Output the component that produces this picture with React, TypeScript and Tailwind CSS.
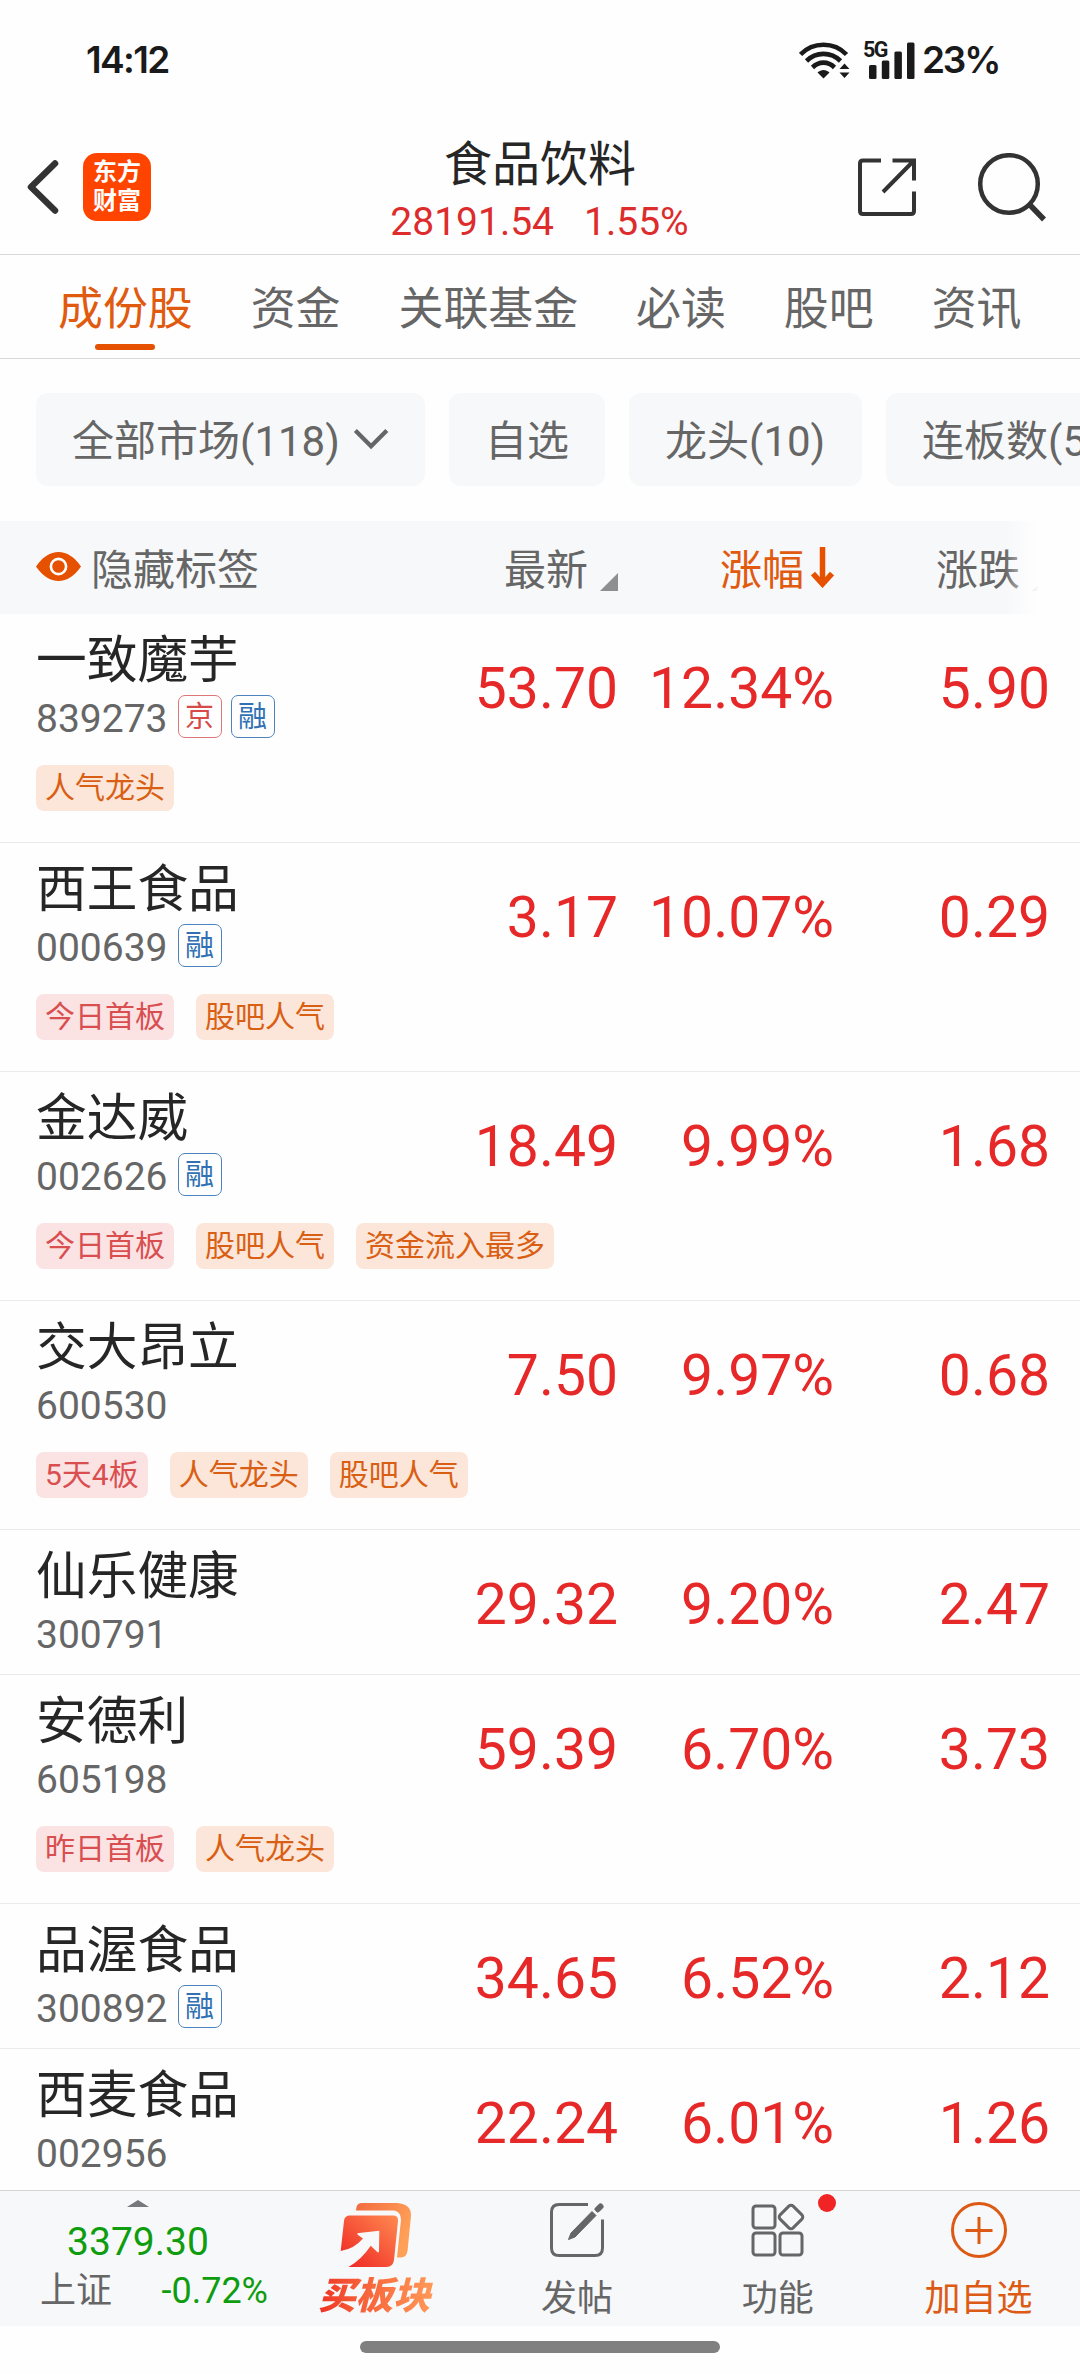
import React from 'react';
import clsx from 'clsx';

type TagTone = 'red' | 'orange';

interface Stock {
  name: string;
  code: string;
  badges?: string[];
  price: string;
  percent: string;
  change: string;
  tags?: { label: string; tone: TagTone }[];
}

const tabs = ['成份股', '资金', '关联基金', '必读', '股吧', '资讯'];

const stocks: Stock[] = [
  {
    name: '一致魔芋', code: '839273', badges: ['京', '融'], price: '53.70', percent: '12.34%', change: '5.90',
    tags: [{ label: '人气龙头', tone: 'orange' }],
  },
  {
    name: '西王食品', code: '000639', badges: ['融'], price: '3.17', percent: '10.07%', change: '0.29',
    tags: [{ label: '今日首板', tone: 'red' }, { label: '股吧人气', tone: 'orange' }],
  },
  {
    name: '金达威', code: '002626', badges: ['融'], price: '18.49', percent: '9.99%', change: '1.68',
    tags: [
      { label: '今日首板', tone: 'red' },
      { label: '股吧人气', tone: 'orange' },
      { label: '资金流入最多', tone: 'orange' },
    ],
  },
  {
    name: '交大昂立', code: '600530', price: '7.50', percent: '9.97%', change: '0.68',
    tags: [
      { label: '5天4板', tone: 'red' },
      { label: '人气龙头', tone: 'orange' },
      { label: '股吧人气', tone: 'orange' },
    ],
  },
  { name: '仙乐健康', code: '300791', price: '29.32', percent: '9.20%', change: '2.47' },
  {
    name: '安德利', code: '605198', price: '59.39', percent: '6.70%', change: '3.73',
    tags: [{ label: '昨日首板', tone: 'red' }, { label: '人气龙头', tone: 'orange' }],
  },
  { name: '品渥食品', code: '300892', badges: ['融'], price: '34.65', percent: '6.52%', change: '2.12' },
  { name: '西麦食品', code: '002956', price: '22.24', percent: '6.01%', change: '1.26' },
];

const StatusBar = () => (
  <div className="h-[120px] shrink-0 flex items-center pl-[86px] text-[#1a1a1a]">
    <span className="w-[713px] font-['Inter'] font-semibold text-[37px] leading-[40px] tracking-[-1.6px]">14:12</span>
    <svg width="51" height="37" viewBox="0 0 51 37" fill="none" stroke="#1a1a1a" strokeWidth="4.6">
      <path d="M1.5 12.5C14 -0.5 35 -0.5 47.5 12.5" />
      <path d="M7.5 19C17 9.5 32 9.5 41.5 19" />
      <path d="M13.5 25.5C20 19 29 19 35.5 25.5" />
      <path d="M24.5 36.5L18.5 30.5C22 27 27 27 30.5 30.5Z" fill="#1a1a1a" stroke="none" />
      <path d="M40.5 27L45.5 21.5L50.5 27ZM40.5 30.5L45.5 36L50.5 30.5Z" fill="#1a1a1a" stroke="none" />
    </svg>
    <div className="relative ml-[13px] w-[52px] h-[37px]">
      <span className="absolute left-0 -top-[1px] font-['Roboto'] font-bold text-[21.5px] leading-[18px] tracking-[-1.5px]">
        5G
      </span>
      <svg className="absolute left-0 top-0" width="52" height="37" viewBox="0 0 52 37" fill="#1a1a1a">
        <rect x="6" y="23" width="7.5" height="14" rx="1.5" />
        <rect x="18.8" y="18.5" width="7.5" height="18.5" rx="1.5" />
        <rect x="31.4" y="9.5" width="7.5" height="27.5" rx="1.5" />
        <rect x="44" y="0.5" width="7.5" height="36.5" rx="1.5" />
      </svg>
    </div>
    <span className="ml-[7px] font-['Inter'] font-semibold text-[37px] leading-[40px] tracking-[-2.2px]">23%</span>
  </div>
);

const Header = () => (
  <div className="h-[135px] shrink-0 flex border-b border-[#d8d8d8]">
    <div className="w-[360px] pl-[26px] pt-[33px] flex items-start">
      <svg className="mt-[6px]" width="34" height="56" viewBox="0 0 34 56" fill="none" stroke="#333" strokeWidth="6.5" strokeLinecap="round" strokeLinejoin="round">
        <path d="M29 4.5L5 28L29 51.5" />
      </svg>
      <div className="ml-[23px] size-[68px] rounded-[14px] bg-[#ff4400] text-white font-bold text-[24px] leading-[29px] flex flex-col items-center justify-center">
        <span>东方</span>
        <span>财富</span>
      </div>
    </div>
    <div className="w-[360px] pt-[20px] flex flex-col items-center whitespace-nowrap">
      <h1 className="text-[48px] leading-[50px] text-[#262626]">食品饮料</h1>
      <div className="mt-[9px] -ml-[1px] flex gap-[30px] text-[39px] leading-[46px] text-[#dd2c2c]">
        <span>28191.54</span>
        <span>1.55%</span>
      </div>
    </div>
    <div className="w-[360px] pl-[137px] pt-[33px] flex items-start">
      <svg className="mt-[4px]" width="60" height="60" viewBox="0 0 60 60" fill="none" stroke="#333" strokeWidth="4">
        <path d="M24 3.5H6Q3 3.5 3 6.5V54Q3 57 6 57H54Q57 57 57 54V34.5" />
        <path d="M35.5 3.5H57V23.5M56 4.5L26 35" />
      </svg>
      <svg className="ml-[60px]" width="70" height="70" viewBox="0 0 70 70" fill="none" stroke="#333" strokeWidth="4.5">
        <circle cx="32" cy="31" r="28.8" />
        <path d="M52.5 51.5L67 66.5" strokeWidth="5.5" />
      </svg>
    </div>
  </div>
);

const Tabs = () => (
  <div className="h-[104px] shrink-0 flex gap-[58px] pl-[58px] pt-[29px] border-b border-[#d8d8d8] text-[44.9px] leading-[52px] text-[#666] whitespace-nowrap">
    {tabs.map((tab, i) => (
      <div key={tab} className={clsx('flex flex-col items-center', i === 0 && 'text-[#e05a10]')}>
        <span>{tab}</span>
        {i === 0 && <i className="mt-[8px] w-[60px] h-[6px] rounded-full bg-[#e65100]" />}
      </div>
    ))}
  </div>
);

const Filters = () => (
  <div className="h-[162px] shrink-0 flex gap-6 pl-9 pt-[34px] overflow-hidden text-[42px] leading-[97px] text-[#666] whitespace-nowrap">
    <div className="h-[93px] w-[389px] shrink-0 px-9 rounded-xl bg-[#f7f8fa] flex items-start">
      <span>全部市场(118)</span>
      <svg className="ml-[13px] mt-[34px]" width="38" height="24" viewBox="0 0 38 24" fill="none" stroke="#666" strokeWidth="4.5">
        <path d="M2.5 3L19 19.5L35.5 3" />
      </svg>
    </div>
    <div className="h-[93px] shrink-0 px-9 rounded-xl bg-[#f7f8fa]">自选</div>
    <div className="h-[93px] w-[233px] shrink-0 px-9 rounded-xl bg-[#f7f8fa]">龙头(10)</div>
    <div className="h-[93px] shrink-0 px-9 rounded-xl bg-[#f7f8fa]">连板数(5)</div>
  </div>
);

const TableHead = () => (
  <div className="relative h-[93px] shrink-0 grid grid-cols-[418px_200px_216px_216px] bg-[#f7f8fa] text-[42px] leading-[100px] text-[#666] whitespace-nowrap">
    <div className="pl-9 flex items-start">
      <svg className="mt-[31px]" width="45" height="29" viewBox="0 0 45 29">
        <path d="M0 14.5Q10 0 22.5 0T45 14.5Q35 29 22.5 29T0 14.5Z" fill="#e65100" />
        <circle cx="22.5" cy="14.5" r="7.6" fill="none" stroke="#fff" strokeWidth="2.6" />
      </svg>
      <span className="ml-[10px]">隐藏标签</span>
    </div>
    <div className="flex justify-end">
      <span>最新</span>
      <svg className="ml-[12px] mt-[52px]" width="18" height="18" viewBox="0 0 18 18">
        <path d="M18 0V18H0Z" fill="#8e8e93" />
      </svg>
    </div>
    <div className="flex justify-end text-[#e05a10]">
      <span>涨幅</span>
      <svg className="ml-[7px] mt-[26px]" width="23" height="41" viewBox="0 0 23 41" fill="none" stroke="#e65100">
        <path d="M11.5 0V36" strokeWidth="5.5" />
        <path d="M2 26.5L11.5 37L21 26.5" strokeWidth="5.5" />
      </svg>
    </div>
    <div className="flex justify-end">
      <span>涨跌</span>
      <svg className="ml-[12px] mt-[52px]" width="18" height="18" viewBox="0 0 18 18">
        <path d="M18 0V18H0Z" fill="#8e8e93" />
      </svg>
    </div>
    {/* fade towards the columns further right */}
    <div className="absolute right-0 top-0 h-full w-[75px] bg-linear-to-r from-[#fefefe]/0 to-[#fefefe] to-45%" />
  </div>
);

const StockRow: React.FC<{ stock: Stock }> = ({ stock }) => (
  <div className={clsx('shrink-0 border-b border-[#ebebeb] whitespace-nowrap', stock.tags ? 'h-[229px]' : 'h-[145px]')}>
    <div className="h-[125px] grid grid-cols-[418px_200px_216px_216px]">
      <div className="pl-9 pt-[17px]">
        <div className="text-[50.7px] leading-[60px] text-[#262626]">{stock.name}</div>
        <div className="mt-[4px] flex items-start h-[44px] gap-[9px]">
          <span className="text-[39px] leading-[48px] text-[#666] mr-[1px]">{stock.code}</span>
          {stock.badges?.map((badge) => (
            <span
              key={badge}
              className={clsx(
                'w-[44px] h-[43px] border rounded-[7px] text-[29px] leading-[42px] text-center',
                badge === '京' ? 'border-[#dd7777] text-[#d64a4a]' : 'border-[#4d84bd] text-[#3070b3]',
              )}
            >
              {badge}
            </span>
          ))}
        </div>
      </div>
      <div className="pt-[45px] text-right text-[57px] leading-[60px] text-[#e62828]">{stock.price}</div>
      <div className="pt-[45px] text-right text-[57px] leading-[60px] text-[#e62828]">{stock.percent}</div>
      <div className="pt-[45px] text-right text-[57px] leading-[60px] text-[#e62828]">{stock.change}</div>
    </div>
    {stock.tags && (
      <div className="mt-[26px] pl-9 flex gap-[22px]">
        {stock.tags.map((tag) => (
          <span
            key={tag.label}
            className={clsx(
              'h-[46px] px-[9px] rounded-lg text-[30px] leading-[46px]',
              tag.tone === 'red' ? 'bg-[#fbe3e4] text-[#d94f50]' : 'bg-[#fce6d9] text-[#d95f14]',
            )}
          >
            {tag.label}
          </span>
        ))}
      </div>
    )}
  </div>
);

const BottomBar = () => (
  <div className="h-[136px] shrink-0 grid grid-cols-[276px_1fr_1fr_1fr_1fr] pr-[1px] border-t border-[#d4d4d4] bg-[#f7f8fa] text-[36px] leading-[42px] text-[#666] whitespace-nowrap">
    <div className="pt-[9px] flex flex-col items-center">
      <svg width="22" height="7" viewBox="0 0 22 7">
        <path d="M11 0L22 7H0Z" fill="#77777c" />
      </svg>
      <span className="mt-[13px] text-[39px] leading-[44px] text-[#0f9d0f]">3379.30</span>
      <div className="mt-[3px] w-[228px] flex justify-between leading-[48px] -mr-[32px]">
        <span>上证</span>
        <span className="text-[#0f9d0f]">-0.72%</span>
      </div>
    </div>
    <div className="pt-[11px] flex flex-col items-center">
      <svg width="72" height="66" viewBox="0 0 72 66">
        <defs>
          <linearGradient id="boardFront" x1="0" y1="1" x2="1" y2="0">
            <stop offset="0" stopColor="#ee2222" />
            <stop offset="1" stopColor="#ff8a50" />
          </linearGradient>
          <linearGradient id="boardBack" x1="0" y1="0" x2="1" y2="0.4">
            <stop offset="0" stopColor="#f26a40" />
            <stop offset="1" stopColor="#ffa058" />
          </linearGradient>
        </defs>
        <path d="M16 8.5L16.5 5Q17.5 1 22 1H57Q71.5 2 71 14L67.5 49Q66.5 55.5 61 55.5H57L61 18Q61 9.5 54 8.5Z" fill="url(#boardBack)" />
        <path d="M10 13.5H53Q58.5 13.5 58 19L54 58Q53 65 46.5 65H8.5Q22 57 30.7 43.7L37 49.7Q39 51.5 39 49L39.3 28.7L19 31Q16 31.5 18 33L23 36.5Q14 47 0.7 49L4 19Q4.5 13.5 10 13.5Z" fill="url(#boardFront)" />
      </svg>
      <span className="mt-[8px] px-1 -ml-[4px] font-black italic text-[37.5px] leading-[40px] bg-linear-to-r from-[#ee2a22] to-[#ff9a58] bg-clip-text text-transparent">
        买板块
      </span>
    </div>
    <div className="pt-[11px] flex flex-col items-center">
      <svg width="56" height="56" viewBox="0 0 56 56" fill="none" stroke="#666" strokeWidth="3">
        <path d="M39 2.5H10Q2.5 2.5 2.5 10V46Q2.5 53.5 10 53.5H46Q53.5 53.5 53.5 46V17.5" />
        <path d="M19.5 37.5L22 31L43 9.5L47 13.5L26 35Z" fill="#666" strokeWidth="1" />
        <path d="M48.5 7.5L51.5 4.5" strokeWidth="6" strokeLinecap="round" />
        <path d="M43.5 7L50 13.5" strokeWidth="1.5" stroke="#f7f8fa" />
      </svg>
      <span className="mt-[20px]">发帖</span>
    </div>
    <div className="relative pt-[11px] flex flex-col items-center">
      <svg width="56" height="56" viewBox="0 0 56 56" fill="none" stroke="#666" strokeWidth="3">
        <rect x="3" y="4" width="22" height="22" rx="3" />
        <rect x="3" y="31" width="22" height="22" rx="3" />
        <rect x="30" y="31" width="22" height="22" rx="3" />
        <rect x="31.8" y="5.8" width="18.4" height="18.4" rx="3" transform="rotate(45 41 15)" />
      </svg>
      <span className="mt-[20px]">功能</span>
      <i className="absolute left-[140px] top-[3px] size-[18px] rounded-full bg-[#f02424]" />
    </div>
    <div className="pt-[11px] flex flex-col items-center text-[#dd5a14]">
      <svg width="56" height="56" viewBox="0 0 56 56" fill="none" stroke="#dd5a14" strokeWidth="3">
        <circle cx="28" cy="28" r="26.5" />
        <path d="M28 15V42M14.5 28.5H41.5" />
      </svg>
      <span className="mt-[20px]">加自选</span>
    </div>
  </div>
);

export default function App() {
  return (
    <div className="w-[1080px] h-[2374px] flex flex-col overflow-hidden bg-[#fefefe] font-['Roboto','Noto_Sans_CJK_SC',sans-serif]">
      <StatusBar />
      <Header />
      <Tabs />
      <Filters />
      <TableHead />
      <div className="h-[1576px] shrink-0 flex flex-col overflow-hidden">
        {stocks.map((stock) => (
          <StockRow key={stock.code} stock={stock} />
        ))}
      </div>
      <BottomBar />
      {/* Home indicator */}
      <div className="flex-1 pt-[15px] flex justify-center items-start">
        <div className="w-[360px] h-3 rounded-full bg-[#808080]" />
      </div>
    </div>
  );
}
